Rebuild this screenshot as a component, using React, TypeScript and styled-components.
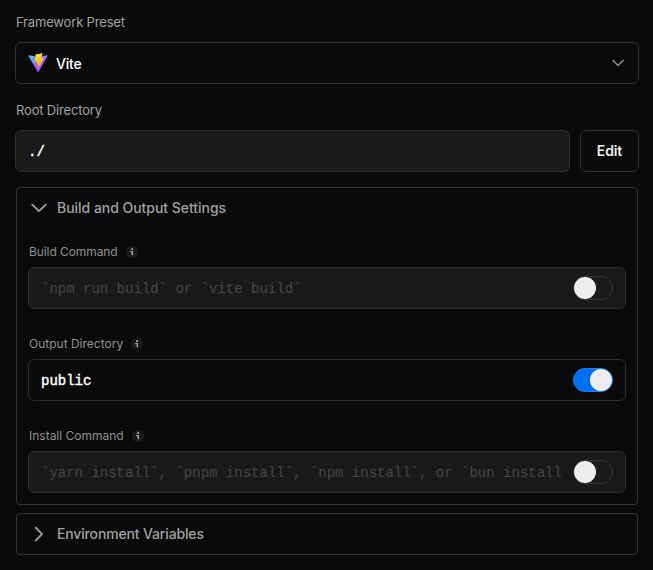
import React from "react";
import styled, { createGlobalStyle } from "styled-components";

const GlobalStyle = createGlobalStyle`
  *, *::before, *::after { box-sizing: border-box; }
  html, body { margin: 0; background: #0a0a0a; }
  body { font-family: Inter, "Liberation Sans", sans-serif; color: #ededed; overflow: hidden; }
`;

const Page = styled.main`
  height: 570px;
  padding: 12px 14px 0 15px;
  background: #0a0a0a;
`;

const Label = styled.div`
  height: 20px;
  padding-left: 1px;
  font-size: 13px;
  line-height: 20px;
  letter-spacing: -0.17px;
  color: #a1a1a1;
`;

const Select = styled.button`
  display: flex;
  align-items: center;
  width: 100%;
  height: 42px;
  margin: 10px 0 16px;
  padding: 0 14px 0 12px;
  border: 1px solid #2e2e2e;
  border-radius: 6px;
  background: #0a0a0a;
  color: #ededed;
  font: 500 14px/20px Inter, sans-serif;
  text-align: left;
`;

const SelectValue = styled.span`
  flex: 1;
  margin-left: 8px;
  padding-top: 1px;
  letter-spacing: -0.2px;
  color: #fff;
`;

const DirectoryRow = styled.div`
  display: flex;
  gap: 10px;
  margin: 10px 0 15px;
`;

const Field = styled.div<{ $disabled?: boolean }>`
  display: flex;
  align-items: center;
  flex: 1;
  min-width: 0;
  height: 42px;
  padding: 0 12px;
  border: 1px solid #2e2e2e;
  border-radius: 6px;
  background: ${(p) => (p.$disabled ? "#1a1a1a" : "#0a0a0a")};
`;

const Value = styled.span<{ $placeholder?: boolean }>`
  flex: 1;
  min-width: 0;
  padding-top: 2px;
  overflow: hidden;
  white-space: pre;
  font: 400 14px/20px "Liberation Mono", monospace;
  color: ${(p) => (p.$placeholder ? "#454545" : "#fff")};
  -webkit-text-stroke: ${(p) => (p.$placeholder ? "0" : "0.4px #fff")};
`;

const EditButton = styled.button`
  width: 59px;
  height: 42px;
  padding: 0;
  border: 1px solid #2e2e2e;
  border-radius: 6px;
  background: #0a0a0a;
  color: #ededed;
  font: 600 14px/20px Inter, sans-serif;
  letter-spacing: -0.1px;
`;

const Panel = styled.section`
  margin: 0 1px 8px;
  border: 1px solid #333;
  border-radius: 4px;
`;

const PanelHeader = styled.header`
  display: flex;
  align-items: center;
  gap: 8px;
  height: 40px;
  padding-left: 12px;
  color: #a1a1a1;
`;

const PanelTitle = styled.h2<{ $tracking: number }>`
  margin: 0;
  font: 500 14px/20px Inter, sans-serif;
  letter-spacing: ${(p) => p.$tracking}px;
`;

const PanelBody = styled.div`
  display: flex;
  flex-direction: column;
  gap: 25px;
  padding: 14px 11px 11px;
`;

const SettingLabel = styled.div<{ $tracking: number }>`
  display: flex;
  align-items: center;
  gap: 8px;
  height: 20px;
  margin-bottom: 5px;
  padding-left: 1px;
  font-size: 12px;
  line-height: 20px;
  letter-spacing: ${(p) => p.$tracking}px;
  color: #8f8f8f;
`;

const Track = styled.span<{ $on?: boolean }>`
  display: flex;
  flex: none;
  align-items: center;
  justify-content: ${(p) => (p.$on ? "flex-end" : "flex-start")};
  width: 40px;
  height: 24px;
  margin-left: 10px;
  border: 1px solid ${(p) => (p.$on ? "#1c80f5" : "#353535")};
  border-radius: 12px;
  background: ${(p) => (p.$on ? "#0070f3" : "#1a1a1a")};
`;

const Thumb = styled.span`
  width: 22px;
  height: 22px;
  border-radius: 50%;
  background: #ededed;
`;

const ViteLogo = () => (
  <svg width="20" height="20" viewBox="0 0 410 404" fill="none">
    <path
      d="M399.641 59.5246L215.643 388.545C211.844 395.338 202.084 395.378 198.228 388.618L10.5817 59.5563C6.38087 52.1896 12.6802 43.2665 21.0281 44.7586L205.223 77.6824C206.398 77.8924 207.601 77.8904 208.776 77.6763L389.119 44.8058C397.439 43.2894 403.768 52.1434 399.641 59.5246Z"
      fill="url(#viteBody)"
    />
    <path
      d="M292.965 1.5744L156.801 28.2552C154.563 28.6937 152.906 30.5903 152.771 32.8664L144.395 174.33C144.198 177.662 147.258 180.248 150.51 179.498L188.42 170.749C191.967 169.931 195.172 173.055 194.443 176.622L183.18 231.775C182.422 235.487 185.907 238.661 189.532 237.56L212.947 230.446C216.577 229.344 220.065 232.527 219.297 236.242L201.398 322.875C200.278 328.294 207.486 331.249 210.492 326.603L212.5 323.5L323.454 102.072C325.312 98.3645 322.108 94.137 318.036 94.9228L279.014 102.454C275.347 103.161 272.227 99.746 273.262 96.1583L298.731 7.86689C299.767 4.27314 296.636 0.855181 292.965 1.5744Z"
      fill="url(#viteBolt)"
    />
    <defs>
      <linearGradient id="viteBody" x1="6" y1="33" x2="235" y2="344" gradientUnits="userSpaceOnUse">
        <stop stopColor="#41D1FF" />
        <stop offset="1" stopColor="#BD34FE" />
      </linearGradient>
      <linearGradient id="viteBolt" x1="194.651" y1="8.818" x2="236.076" y2="292.989" gradientUnits="userSpaceOnUse">
        <stop stopColor="#FFEA83" />
        <stop offset="0.083" stopColor="#FFDD35" />
        <stop offset="1" stopColor="#FFA800" />
      </linearGradient>
    </defs>
  </svg>
);

const SelectChevron = () => (
  <svg width="12" height="8" viewBox="0 0 12 8" fill="none" stroke="#8f8f8f" strokeWidth="1.5">
    <path d="M0.5 1L6 6.5L11.5 1" />
  </svg>
);

const Chevron = ({ open }: { open?: boolean }) => (
  <svg width="20" height="20" viewBox="0 0 20 20" fill="none" stroke="#a1a1a1" strokeWidth="1.8" strokeLinecap="round" strokeLinejoin="round">
    <path d={open ? "M3.2 6.7L10 13.2L16.8 6.7" : "M6.7 3.6L13 10.1L6.7 16.6"} />
  </svg>
);

const InfoIcon = () => (
  <svg width="12" height="12" viewBox="0 0 12 12">
    <circle cx="6" cy="6" r="6" fill="#1a1a1a" />
    <path d="M5.1 2.3H7V4H5.1zM4.3 5H7V9.2H5.6V6.2H4.3z" fill="#a1a1a1" />
  </svg>
);

const Switch = ({ on }: { on?: boolean }) => (
  <Track $on={on} role="switch" aria-checked={!!on}>
    <Thumb />
  </Track>
);

const settings = [
  { label: "Build Command", text: "`npm run build` or `vite build`", on: false, tracking: -0.08 },
  { label: "Output Directory", text: "public", on: true, tracking: 0 },
  { label: "Install Command", text: "`yarn install`, `pnpm install`, `npm install`, or `bun install", on: false, tracking: 0 },
];

export default function App() {
  return (
    <>
      <GlobalStyle />
      <Page>
        <Label>Framework Preset</Label>
        <Select>
          <ViteLogo />
          <SelectValue>Vite</SelectValue>
          <SelectChevron />
        </Select>
        <Label>Root Directory</Label>
        <DirectoryRow>
          <Field $disabled>
            <Value>./</Value>
          </Field>
          <EditButton>Edit</EditButton>
        </DirectoryRow>
        <Panel>
          <PanelHeader>
            <Chevron open />
            <PanelTitle $tracking={-0.03}>Build and Output Settings</PanelTitle>
          </PanelHeader>
          <PanelBody>
            {settings.map((s) => (
              <div key={s.label}>
                <SettingLabel $tracking={s.tracking}>
                  {s.label}
                  <InfoIcon />
                </SettingLabel>
                <Field $disabled={!s.on}>
                  <Value $placeholder={!s.on}>{s.text}</Value>
                  <Switch on={s.on} />
                </Field>
              </div>
            ))}
          </PanelBody>
        </Panel>
        <Panel>
          <PanelHeader>
            <Chevron />
            <PanelTitle $tracking={-0.15}>Environment Variables</PanelTitle>
          </PanelHeader>
        </Panel>
      </Page>
    </>
  );
}
